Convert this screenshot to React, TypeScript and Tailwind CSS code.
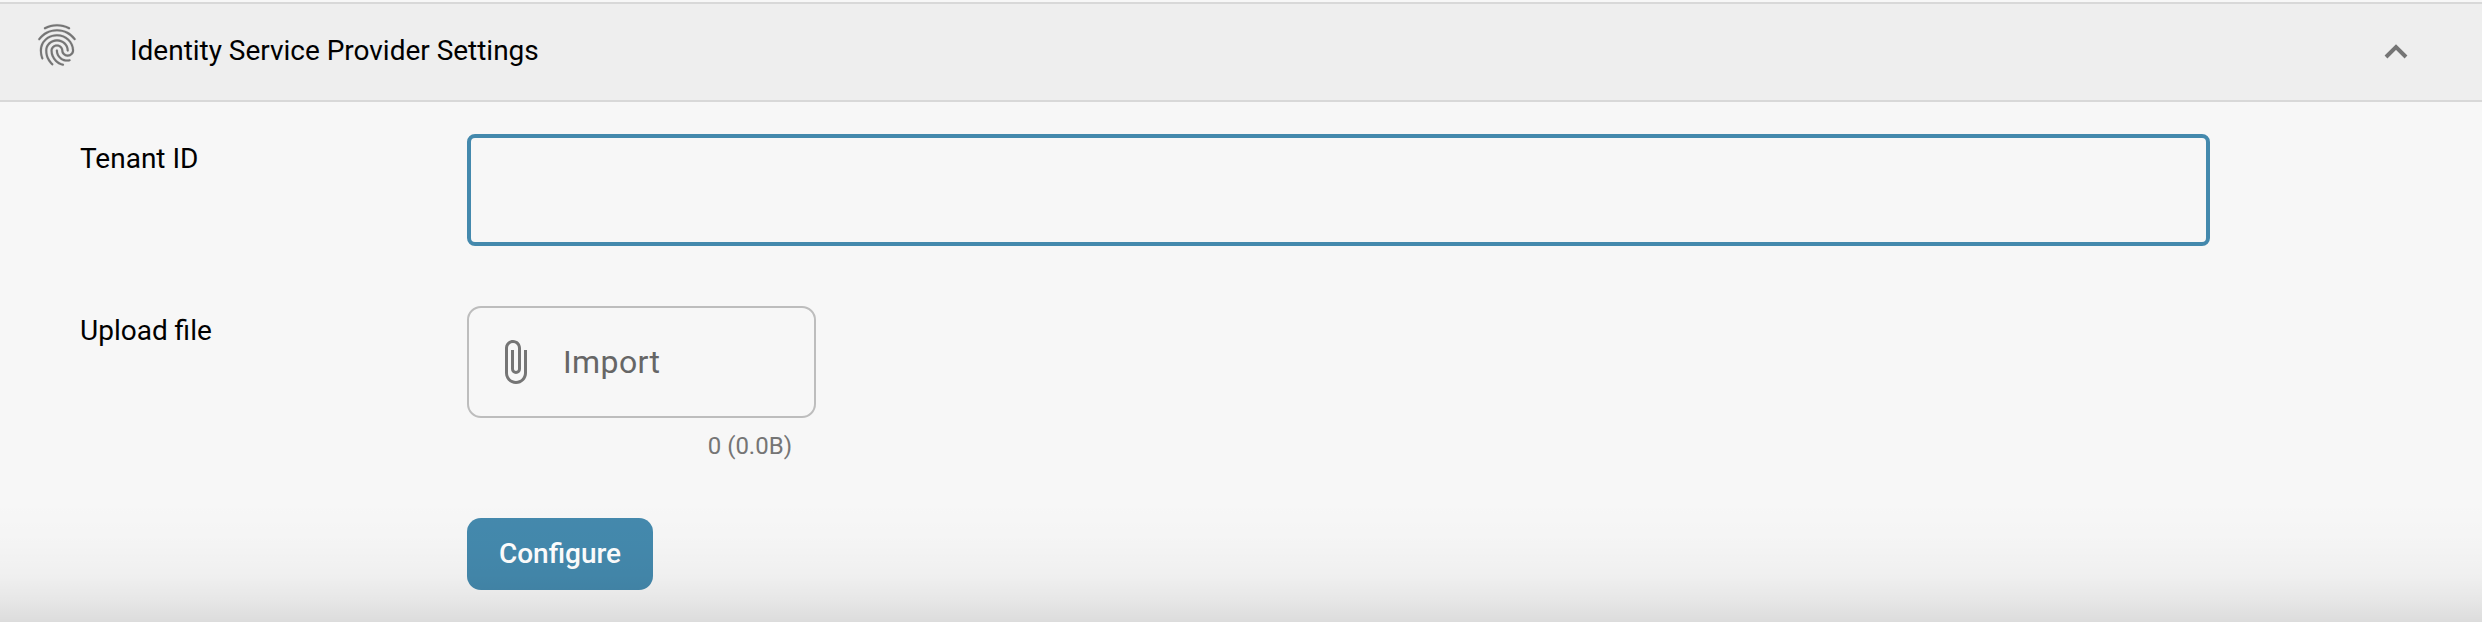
import { MdAttachFile, MdFingerprint } from "react-icons/md";

function Label({ children }: { children: string }) {
  return <div className="mt-[9px] w-[387px] shrink-0 text-[28px] leading-8">{children}</div>;
}

export default function App() {
  return (
    <div className="relative flex h-[622px] w-full flex-col overflow-hidden bg-[#f7f7f7] pt-0.5 font-['Roboto',sans-serif] text-black">
      <header className="flex h-[100px] shrink-0 items-start border-y-2 border-[#d8d8d8] bg-[#eeeeee] pl-8">
        <MdFingerprint className="mt-4 size-[50px] stroke-[0.08] text-[#757575] [&>path[fill=none]]:stroke-none" />
        <h1 className="mt-[31px] ml-12 text-[28px] leading-8 tracking-[-0.02px]">Identity Service Provider Settings</h1>
        <svg className="mt-10 mr-[74px] ml-auto h-4 w-6" viewBox="0 0 24 16" fill="none" stroke="#757575" strokeWidth="4">
          <path d="M2 13 12 3l10 10" />
        </svg>
      </header>
      <main className="flex flex-col pl-20">
        <div className="mt-8 flex">
          <Label>Tenant ID</Label>
          <input aria-label="Tenant ID" className="h-28 w-[1743px] rounded-lg border-4 border-[#4489ad] bg-transparent px-6 text-[32px] outline-none" />
        </div>
        <div className="mt-[60px] flex">
          <Label>Upload file</Label>
          <div className="w-[349px]">
            <button className="flex h-28 w-full items-center rounded-[14px] border-2 border-[#bdbdbd] pl-[22px] text-[#666666]">
              <MdAttachFile className="size-12 text-[#757575]" />
              <span className="ml-6 text-[32px] leading-10 tracking-[0.4px]">Import</span>
            </button>
            <div className="mt-3 pr-6 text-right text-[24px] leading-8 text-[#757575]">0 (0.0B)</div>
          </div>
        </div>
        <button className="mt-14 ml-[387px] flex h-[72px] w-[186px] items-center justify-center rounded-[14px] bg-[#4489ad] text-[28px] leading-8 font-medium text-white">
          Configure
        </button>
      </main>
      <div className="pointer-events-none absolute inset-x-0 bottom-0 h-[122px] bg-[linear-gradient(to_bottom,rgba(0,0,0,0)_0%,rgba(0,0,0,0.01)_36%,rgba(0,0,0,0.03)_62%,rgba(0,0,0,0.068)_82%,rgba(0,0,0,0.11)_100%)]" />
    </div>
  );
}
